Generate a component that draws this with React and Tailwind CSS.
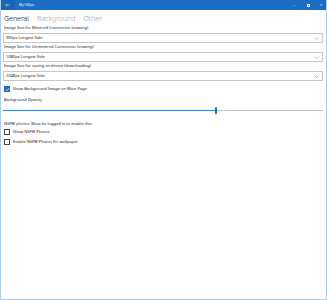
import React from "react";

function Chevron() {
  return (
    <svg width="5" height="3" viewBox="0 0 5 3" className="shrink-0">
      <path d="M0.5 0.5 L2.5 2.5 L4.5 0.5" fill="none" stroke="#8a8a8a" strokeWidth="0.6" />
    </svg>
  );
}

function Dropdown({ text }) {
  return (
    <div className="h-[10px] border border-[#c6c6c6] bg-white flex items-center justify-between pl-[2px] pr-[3px]">
      <span className="text-[4px] leading-none text-[#222]">{text}</span>
      <Chevron />
    </div>
  );
}

function Label({ children }) {
  return (
    <div className="h-[9px] flex items-center pl-[1px] pb-[1px] text-[4px] leading-none text-[#222]">
      {children}
    </div>
  );
}

function Check({ checked, children }) {
  return (
    <div className="flex items-center h-[6px] pl-[1px]">
      {checked ? (
        <div className="w-[6px] h-[6px] bg-[#1b6ec2] flex items-center justify-center">
          <svg width="5" height="5" viewBox="0 0 5 5">
            <path d="M0.8 2.6 L2 3.7 L4.2 1.2" fill="none" stroke="white" strokeWidth="0.7" />
          </svg>
        </div>
      ) : (
        <div className="w-[6px] h-[6px] border border-[#444] bg-white" />
      )}
      <span className="ml-[3px] text-[4px] leading-none text-[#222]">{children}</span>
    </div>
  );
}

export default function App() {
  return (
    <div
      className="w-[327px] h-[300px] flex flex-col bg-white border-x border-b border-[#a9cdea] overflow-hidden"
      style={{ fontFamily: '"Noto Sans", "Open Sans", sans-serif' }}
    >
      <div className="h-[10px] bg-[#1b6ec2] flex items-center text-white shrink-0 -mx-[1px]">
        <div className="w-[15px] h-full bg-[#1966b6] flex items-center justify-center">
          <svg width="5" height="4" viewBox="0 0 5 4">
            <path d="M4.6 2 H0.6 M2 0.6 L0.6 2 L2 3.4" fill="none" stroke="white" strokeWidth="0.5" />
          </svg>
        </div>
        <span className="ml-[4px] text-[3.3px] leading-none">My 500px</span>
        <div className="ml-auto flex items-center h-full text-[4px] leading-none">
          <span className="w-[14px] text-center">–</span>
          <span className="w-[14px] flex justify-center"><span className="w-[3px] h-[3px] border border-white" /></span>
          <span className="w-[12px] text-center">×</span>
        </div>
      </div>
      <div className="flex flex-col pl-[2px] pr-[3px]">
        <div className="h-[14px] flex items-end pb-[2px] pl-[1px] gap-[8px] text-[7px] leading-none font-light">
          <span className="text-[#111]">General</span>
          <span className="text-[#a0a0a0]">Background</span>
          <span className="text-[#a0a0a0]">Other</span>
        </div>
        <Label>Image Size for Metered Connection (viewing)</Label>
        <Dropdown text="900px Longest Side" />
        <Label>Image Size for Unmetered Connection (viewing)</Label>
        <Dropdown text="1080px Longest Side" />
        <Label>Image Size for saving on device (downloading)</Label>
        <Dropdown text="2048px Longest Side" />
        <div className="mt-[5px]">
          <Check checked>Show Background Image on Main Page</Check>
        </div>
        <div className="mt-[6px] pl-[1px] text-[4px] leading-none text-[#222]">Background Opacity</div>
        <div className="mt-[4px] h-[8px] flex items-center">
          <div className="w-[212px] h-[1px] bg-[#3d86cf]" />
          <div className="w-[2px] h-[7px] bg-[#1b6ec2] rounded-[1px]" />
          <div className="flex-1 h-[1px] bg-[#c4c4c4]" />
        </div>
        <div className="mt-[8px] pl-[1px] text-[4px] leading-none text-[#222]">NSFW photos: Must be logged in to enable this.</div>
        <div className="mt-[3px] flex flex-col gap-[4px]">
          <Check>Show NSFW Photos</Check>
          <Check>Enable NSFW Photos for wallpaper</Check>
        </div>
      </div>
    </div>
  );
}
